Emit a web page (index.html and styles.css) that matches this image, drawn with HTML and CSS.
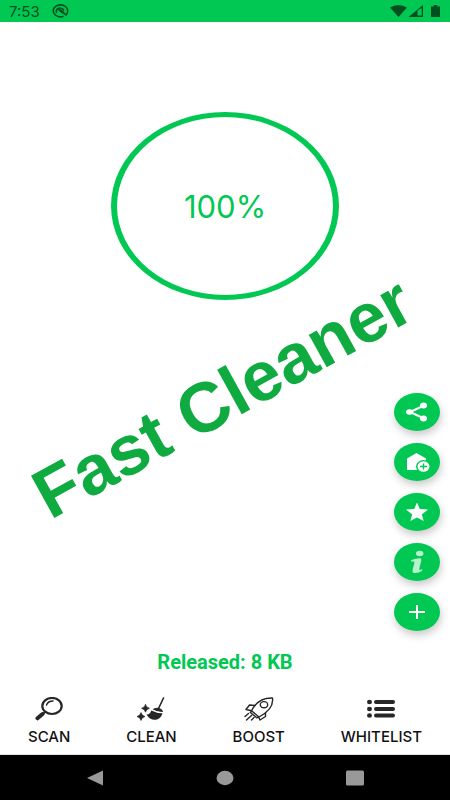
FILE: index.html
```html
<!DOCTYPE html>
<html lang="en">
<head>
<meta charset="utf-8">
<meta name="viewport" content="width=device-width, initial-scale=1">
<title>Fast Cleaner</title>
<link rel="stylesheet" href="styles.css">
</head>

<body>
<header class="status">
	<span class="clock">7:53</span>
	<svg class="status-app" width="17" height="14" viewBox="0 0 17 14" fill="none" stroke="currentColor" stroke-width="1.600">
		<path d="M11.500 12.300A7.200 6 0 1 1 15.700 7q0 2-1.500 4L7.500 6"/>
		<path d="M4.500 9Q3.500 5.500 6.500 4.300 10 3 12 6.500"/>
		<path d="M5.500 5.500Q8.500 4 12 8L13 10.500Q9 9.500 5.500 5.500z" fill="currentColor" stroke="none"/>
	</svg>
	<svg class="status-right" width="52" height="14" viewBox="0 0 52 14" fill="currentColor">
		<path d="M0 3.500Q8.500-1.500 17 3.500L8.500 13z"/>
		<path fill-rule="evenodd" d="M33 1v12H18.500zM27.500 6.500v5h4.200V4z"/>
		<path d="M41 2.500h2.700V1h3.600v1.500H50V13h-9z"/>
	</svg>
</header>

<main class="screen">
	<div class="ring"><span class="percent">100%</span></div>
	<h1 class="wordmark">Fast Cleaner</h1>
	<p class="released">Released: 8 KB</p>

	<div class="fabs">
		<button type="button" class="fab" aria-label="Share">
			<svg width="24" height="20" viewBox="0 0 24 20" fill="#fff" stroke="#fff">
				<path d="M19 3.500L5 10l14 6.500" fill="none" stroke-width="2"/>
				<ellipse cx="4.500" cy="10" rx="3.500" ry="2.800" stroke="none"/>
				<ellipse cx="18.500" cy="3.500" rx="3.500" ry="2.900" stroke="none"/>
				<ellipse cx="18.500" cy="16.500" rx="3.500" ry="2.900" stroke="none"/>
			</svg>
		</button>
		<button type="button" class="fab" aria-label="Add to home">
			<svg width="26" height="20" viewBox="0 0 26 20">
				<path d="M3 6.500L12.500 1 22 6.500V18H3z" fill="#fff"/>
				<ellipse cx="19.500" cy="14.500" rx="7.500" ry="6.500" fill="#00c853"/>
				<ellipse cx="19.500" cy="14.500" rx="6" ry="5.200" fill="#fff"/>
				<path d="M16 14.500h7M19.500 11.500v6" stroke="#00c853" stroke-width="1.400"/>
			</svg>
		</button>
		<button type="button" class="fab" aria-label="Rate">
			<svg width="24" height="20" viewBox="0 0 24 20" fill="#fff">
				<path d="M12 .5l2.800 6.500 8.200.6-6.200 4.800 1.900 6.600-6.700-3.500L5.300 19l1.900-6.600L1 7.600 9.200 7z"/>
			</svg>
		</button>
		<button type="button" class="fab" aria-label="Info">
			<svg width="16" height="24" viewBox="0 0 16 24" fill="#b6f3cd">
				<ellipse cx="10.700" cy="3.500" rx="3.700" ry="2.800"/>
				<path d="M2 10.200Q7 8 11.500 8.300q1.200.2.800 2.200L10.300 18.500q-.3 1.700 1.200 1.400l1.700-.9q.7.800-.5 1.900-3.500 2.500-7.200 2-2.500-.5-2-3l1.900-6.800q.5-1.700-1.200-1.500L2 11.600z"/>
			</svg>
		</button>
		<button type="button" class="fab" aria-label="More">
			<svg width="18" height="14" viewBox="0 0 18 14" stroke="#fff" stroke-width="2">
				<path d="M1 7h16M9 0v14"/>
			</svg>
		</button>
	</div>
</main>

<nav class="tabs">
	<button type="button" class="tab">
		<svg width="30" height="24" viewBox="0 0 30 24" fill="none" stroke="#262626" stroke-linecap="round">
			<ellipse cx="18" cy="9" rx="9.700" ry="8" stroke-width="2.200"/>
			<path d="M12.500 8q1.500-4 6.500-4" stroke-width="1.500"/>
			<path d="M11 15L9.500 16.500" stroke-width="2"/>
			<path d="M8.500 17l-5 4.300" stroke-width="4"/>
		</svg>
		<span>SCAN</span>
	</button>
	<button type="button" class="tab">
		<svg width="28" height="24" viewBox="0 0 28 24" fill="#262626">
			<path d="M26.500 1l-5 10.500" stroke="#262626" stroke-width="1.600" stroke-linecap="round"/>
			<path d="M15.500 12.300q3-2.300 6.500-1.300 3.700 1 4 4-5.500.3-10.500-2.700z"/>
			<path d="M14.300 13.600q5 2.700 11.200 2.700-1.500 5.500-6.500 6.400-6 .8-9.500-5.200 3.500.2 4.800-3.900z"/>
			<path d="M8.500 7.200q.8 3.300 4 4-3.200.8-4 4-.8-3.200-4-4 3.200-.7 4-4zM4 15.500q.8 3.200 4 4-3.200.8-4 4-.8-3.200-4-4 3.200-.8 4-4z" stroke="#262626" stroke-width=".6"/>
		</svg>
		<span>CLEAN</span>
	</button>
	<button type="button" class="tab">
		<svg width="30" height="24" viewBox="0 0 30 24" fill="none" stroke="#262626" stroke-width="1.400" stroke-linejoin="round" stroke-linecap="round">
			<path d="M28.500 1Q30 12 15 20L7.500 13.800Q14 .5 28.500 1z"/>
			<ellipse cx="20" cy="7.700" rx="3.700" ry="3.100"/>
			<path d="M11 8.500L5.500 8 2 12.500l5.500 1.300M21.500 16v3.500L16 23l-1.500-3.300M7.500 13.800l-1.200 1.700 6.500 5.300 2-.9M4.500 16.500L1 19.500M7.500 18.500L2.500 23M10 20.500L7.500 23"/>
		</svg>
		<span>BOOST</span>
	</button>
	<button type="button" class="tab">
		<svg width="28" height="24" viewBox="0 0 28 24" fill="#262626">
			<ellipse cx="2.500" cy="5" rx="2.500" ry="2.200"/>
			<ellipse cx="2.500" cy="12" rx="2.500" ry="2.200"/>
			<ellipse cx="2.500" cy="18.500" rx="2.500" ry="2.200"/>
			<rect x="7" y="3" width="21" height="4" rx="2"/>
			<rect x="7" y="10" width="21" height="4" rx="2"/>
			<rect x="7" y="16.500" width="21" height="4" rx="2"/>
		</svg>
		<span>WHITELIST</span>
	</button>
</nav>

<footer class="system">
	<button type="button" class="key" aria-label="Back">
		<svg width="18" height="16" viewBox="0 0 18 16"><path d="M17 .5v15L1 8z"/></svg>
	</button>
	<button type="button" class="key" aria-label="Home">
		<svg width="18" height="16" viewBox="0 0 18 16"><ellipse cx="9" cy="8" rx="8.500" ry="7.200"/></svg>
	</button>
	<button type="button" class="key" aria-label="Recent apps">
		<svg width="18" height="16" viewBox="0 0 18 16"><rect y=".5" width="18" height="15" rx="1.500"/></svg>
	</button>
</footer>
</body>
</html>
```

FILE: styles.css
```css
* {
	box-sizing: border-box;
}
body {
	margin: 0;
	min-height: 100vh;
	display: flex;
	flex-direction: column;
	background: #fff;
	font-family: Roboto, "Liberation Sans", sans-serif;
}
button {
	border: 0;
	padding: 0;
	background: none;
	font: inherit;
	cursor: pointer;
}
svg {
	display: block;
}

/* status bar */
.status {
	display: flex;
	align-items: center;
	height: 22px;
	padding: 0 8px 0 9px;
	background: #00c853;
	color: #00501f;
}
.clock {
	font-family: Inter, sans-serif;
	font-size: 15px;
}
.status-app {
	margin-left: 12px;
}
.status-right {
	margin-left: auto;
}

/* main screen */
.screen {
	position: relative;
	flex: 1;
	display: flex;
	flex-direction: column;
	align-items: center;
	padding: 90px 0 16px;
}
.ring {
	display: flex;
	align-items: center;
	justify-content: center;
	width: 228px;
	height: 188px;
	border: solid #00c853;
	border-width: 5px 6px;
	border-radius: 50%;
}
.percent {
	font-family: Inter, sans-serif;
	font-size: 31px;
	color: #00c853;
}
.wordmark {
	margin: 56px 0 0;
	padding-right: 6px;
	font-family: "Liberation Sans", Arial, sans-serif;
	font-size: 70px;
	font-weight: bold;
	line-height: 80px;
	white-space: nowrap;
	color: #0fab41;
	transform: rotate(-29deg);
}
.released {
	margin: auto 0 0;
	font-size: 20px;
	font-weight: bold;
	line-height: 24px;
	color: #00c853;
}

/* floating buttons */
.fabs {
	position: absolute;
	right: 10px;
	bottom: 59px;
	display: flex;
	flex-direction: column;
	gap: 12px;
}
.fab {
	display: flex;
	align-items: center;
	justify-content: center;
	width: 46px;
	height: 38px;
	border-radius: 50%;
	background: #00c853;
	box-shadow: 1px 4px 8px rgba(0, 0, 0, 0.22);
}

/* bottom tabs */
.tabs {
	display: flex;
	justify-content: space-around;
	padding: 7px 0 8px;
	border-bottom: 1px solid #e0e0e0;
}
.tab {
	display: flex;
	flex-direction: column;
	align-items: center;
	gap: 7px;
	font-family: Inter, sans-serif;
	font-size: 15px;
	font-weight: 500;
	line-height: 18px;
	color: #111;
}

/* android keys */
.system {
	display: grid;
	grid-template-columns: repeat(3, 1fr);
	align-items: center;
	justify-items: center;
	height: 45px;
	padding: 0 30px;
	background: #000;
}
.key {
	fill: #999;
}
```
